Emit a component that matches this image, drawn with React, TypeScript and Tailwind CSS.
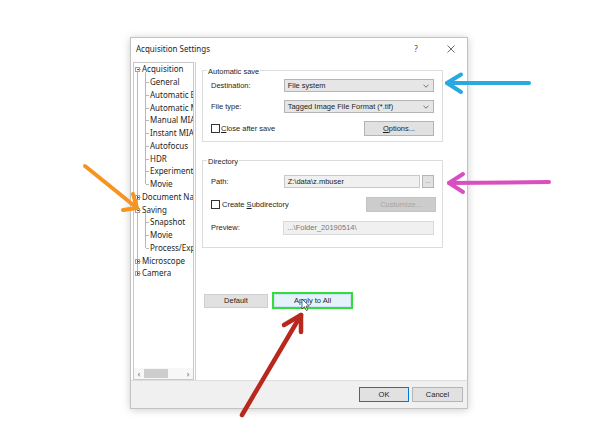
import React from "react";

type Node = { label: string; level: 0 | 1; box?: "minus" | "plus" };

const tree: Node[] = [
  { label: "Acquisition", level: 0, box: "minus" },
  { label: "General", level: 1 },
  { label: "Automatic Exposure", level: 1 },
  { label: "Automatic MIA", level: 1 },
  { label: "Manual MIA", level: 1 },
  { label: "Instant MIA", level: 1 },
  { label: "Autofocus", level: 1 },
  { label: "HDR", level: 1 },
  { label: "Experiment Designer", level: 1 },
  { label: "Movie", level: 1 },
  { label: "Document Name", level: 0, box: "plus" },
  { label: "Saving", level: 0, box: "minus" },
  { label: "Snapshot", level: 1 },
  { label: "Movie", level: 1 },
  { label: "Process/Export", level: 1 },
  { label: "Microscope", level: 0, box: "plus" },
  { label: "Camera", level: 0, box: "plus" },
];

const ROW = 12.75;
const cy = (i: number) => 6.4 + i * ROW;

const Chevron = () => (
  <svg width="6" height="4" viewBox="0 0 6 4" className="ml-auto mr-[4px]">
    <path d="M0.5 0.8 L3 3.2 L5.5 0.8" fill="none" stroke="#555" strokeWidth="0.8" />
  </svg>
);

const Check = () => <span className="w-[9px] h-[9px] border border-[#333] bg-white shrink-0" />;

const TreeLines = () => (
  <svg width="60" height="230" className="absolute left-0 top-0 pointer-events-none">
    <g stroke="#b8b8b8" strokeWidth="1" fill="none" shapeRendering="crispEdges">
      <line x1="3.5" y1={cy(0)} x2="3.5" y2={cy(16)} />
      <line x1="11.5" y1={cy(0) + 3} x2="11.5" y2={cy(9)} />
      <line x1="11.5" y1={cy(11) + 3} x2="11.5" y2={cy(14)} />
      {tree.map((n, i) =>
        n.level === 1 ? (
          <line key={i} x1="11.5" y1={Math.round(cy(i)) + 0.5} x2="15" y2={Math.round(cy(i)) + 0.5} />
        ) : (
          <line key={i} x1="3.5" y1={Math.round(cy(i)) + 0.5} x2="7" y2={Math.round(cy(i)) + 0.5} />
        )
      )}
    </g>
    {tree.map((n, i) =>
      n.box ? (
        <g key={"b" + i} shapeRendering="crispEdges">
          <rect x="1.5" y={Math.round(cy(i)) - 1.5} width="4" height="4" fill="#fff" stroke="#a0a0a0" strokeWidth="1" />
          <line x1="2.5" y1={Math.round(cy(i)) + 0.5} x2="5" y2={Math.round(cy(i)) + 0.5} stroke="#555" strokeWidth="1" />
          {n.box === "plus" && (
            <line x1="3.5" y1={Math.round(cy(i)) - 1} x2="3.5" y2={Math.round(cy(i)) + 2} stroke="#555" strokeWidth="1" />
          )}
        </g>
      ) : null
    )}
  </svg>
);

const Arrows = () => (
  <svg width="592" height="444" className="absolute left-0 top-0 pointer-events-none">
    <g fill="none" strokeLinecap="round" strokeLinejoin="round">
      <g stroke="#28a9e1" strokeWidth="4">
        <path d="M529 83 L447 83" />
        <path d="M461 74.5 L447 83 L461 92" />
      </g>
      <g stroke="#da4fbf" strokeWidth="4">
        <path d="M549 182 L449 183" />
        <path d="M463 174 L449 183 L463 192" />
      </g>
      <g stroke="#f6941f" strokeWidth="4">
        <path d="M85 166 L137 208" />
        <path d="M133 194 L137 208 L123 210" />
      </g>
      <g stroke="#b9281d" strokeWidth="4.5">
        <path d="M242 415 L301 315" />
        <path d="M284 325 L301 315 L301 332" />
      </g>
    </g>
    <path d="M302 299 L302 309 L304.5 306.8 L306.3 310.5 L307.8 309.8 L306 306.2 L309.3 306 Z" fill="#fff" stroke="#222" strokeWidth="0.7" strokeLinejoin="round" />
  </svg>
);

export default function App() {
  const ui = { fontFamily: '"Liberation Sans", Arial, sans-serif' };
  const seg = { fontFamily: '"Noto Sans", "Open Sans", sans-serif' };
  return (
    <div className="relative w-[592px] h-[444px] bg-white overflow-hidden pt-[37px] pl-[130px] text-[#1e1e1e]">
      <div className="w-[338px] h-[372px] border border-[#c2c2c2] bg-white shadow-[0_1px_8px_rgba(0,0,0,0.2)] flex flex-col">
        {/* title bar */}
        <div className="h-[22px] flex items-center pl-[5px] pr-[11px] text-[8px]" style={seg}>
          <span>Acquisition Settings</span>
          <span className="ml-auto w-[10px] text-center text-[#444]">?</span>
          <svg width="10" height="10" viewBox="0 0 10 10" className="ml-[25px]">
            <path d="M1.5 1.5 L8.5 8.5 M8.5 1.5 L1.5 8.5" stroke="#444" strokeWidth="0.8" />
          </svg>
        </div>

        {/* body */}
        <div className="flex-1 flex pl-[2px] pt-[2px] min-h-0">
          <div className="w-[61px] border border-[#c8c8c8] flex flex-col bg-white">
            <div className="relative flex-1 overflow-hidden text-[8px]" style={seg}>
              <TreeLines />
              {tree.map((n, i) => (
                <div
                  key={i}
                  className={`h-[12.75px] flex items-center whitespace-nowrap ${n.level === 0 ? "pl-[8px]" : "pl-[16px]"}`}
                >
                  {n.label}
                </div>
              ))}
            </div>
            <div className="h-[11px] flex items-center text-[8px] text-[#555] bg-[#f7f7f7]" style={seg}>
              <span className="w-[10px] text-center">‹</span>
              <span className="w-[24px] h-[9px] bg-[#cdcdcd]" />
              <span className="ml-auto w-[10px] text-center">›</span>
            </div>
          </div>

          <div className="flex-1 ml-[1px] border-l border-[#cfcfcf] flex flex-col text-[7.5px]" style={ui}>
            {/* Automatic save */}
            <div className="relative mt-[8px] ml-[6px] w-[241px] h-[72px] border border-[#dcdcdc] pt-[8px] px-[8px] flex flex-col">
              <span className="absolute -top-[5px] left-[4px] bg-white px-[1px]">Automatic save</span>
              <div className="flex items-center h-[13px]">
                <span className="w-[73px]">Destination:</span>
                <div className="w-[151px] h-[13px] bg-[#e6e6e6] border border-[#b4b4b4] flex items-center pl-[3px]">
                  File system
                  <Chevron />
                </div>
              </div>
              <div className="flex items-center h-[13px] mt-[8px]">
                <span className="w-[73px]">File type:</span>
                <div className="w-[151px] h-[13px] bg-[#e6e6e6] border border-[#b4b4b4] flex items-center pl-[3px]">
                  Tagged Image File Format (*.tif)
                  <Chevron />
                </div>
              </div>
              <div className="flex items-center h-[15px] mt-[8px]">
                <Check />
                <span className="ml-[1px]">
                  <span className="underline">C</span>lose after save
                </span>
                <div className="ml-auto w-[70px] h-[15px] bg-[#e1e1e1] border border-[#b4b4b4] flex items-center justify-center">
                  <span>
                    <span className="underline">O</span>ptions...
                  </span>
                </div>
              </div>
            </div>

            {/* Directory */}
            <div className="relative mt-[18px] ml-[6px] w-[241px] h-[88px] border border-[#dcdcdc] pt-[14px] px-[8px] flex flex-col">
              <span className="absolute -top-[5px] left-[4px] bg-white px-[1px]">Directory</span>
              <div className="flex items-center h-[13px]">
                <span className="w-[73px]">Path:</span>
                <div className="w-[137px] h-[13px] bg-[#f0f0f0] border border-[#c8c8c8] flex items-center pl-[3px]">
                  Z:\data\z.mbuser
                </div>
                <div className="ml-[2px] w-[12px] h-[13px] bg-[#e1e1e1] border border-[#b4b4b4] flex items-center justify-center text-[6px] text-[#555]">
                  ...
                </div>
              </div>
              <div className="flex items-center h-[15px] mt-[9px]">
                <Check />
                <span className="ml-[2px]">
                  Create <span className="underline">S</span>ubdirectory
                </span>
                <div className="ml-auto -mr-[2px] w-[70px] h-[15px] bg-[#cccccc] border border-[#c4c4c4] flex items-center justify-center text-[#a6a6a6]">
                  Customize...
                </div>
              </div>
              <div className="flex items-center h-[14px] mt-[9px]">
                <span className="w-[73px]">Preview:</span>
                <div className="w-[152px] h-[14px] bg-[#f0f0f0] border border-[#dadada] flex items-center pl-[3px] text-[#777]">
                  ...\Folder_20190514\
                </div>
              </div>
            </div>

            {/* buttons */}
            <div className="flex items-center mt-[44px] ml-[8px]">
              <div className="w-[64px] h-[14px] bg-[#e1e1e1] border border-[#cfcfcf] flex items-center justify-center">
                Default
              </div>
              <div className="ml-[4px] w-[81px] h-[17px] border-2 border-[#34dd3a] flex">
                <div className="flex-1 bg-[#e5f1fb] border border-[#cfe3f6] flex items-center justify-center">
                  Apply to All
                </div>
              </div>
            </div>
          </div>
        </div>

        {/* bottom bar */}
        <div className="h-[28px] bg-[#f0f0f0] border-t border-[#dedede] flex items-center justify-end pr-[4px] gap-[3px] text-[7.5px]" style={ui}>
          <div className="w-[50px] h-[15px] bg-[#e1e1e1] border border-[#0078d7] flex items-center justify-center">OK</div>
          <div className="w-[51px] h-[15px] bg-[#e1e1e1] border border-[#b4b4b4] flex items-center justify-center">Cancel</div>
        </div>
      </div>
      <Arrows />
    </div>
  );
}
